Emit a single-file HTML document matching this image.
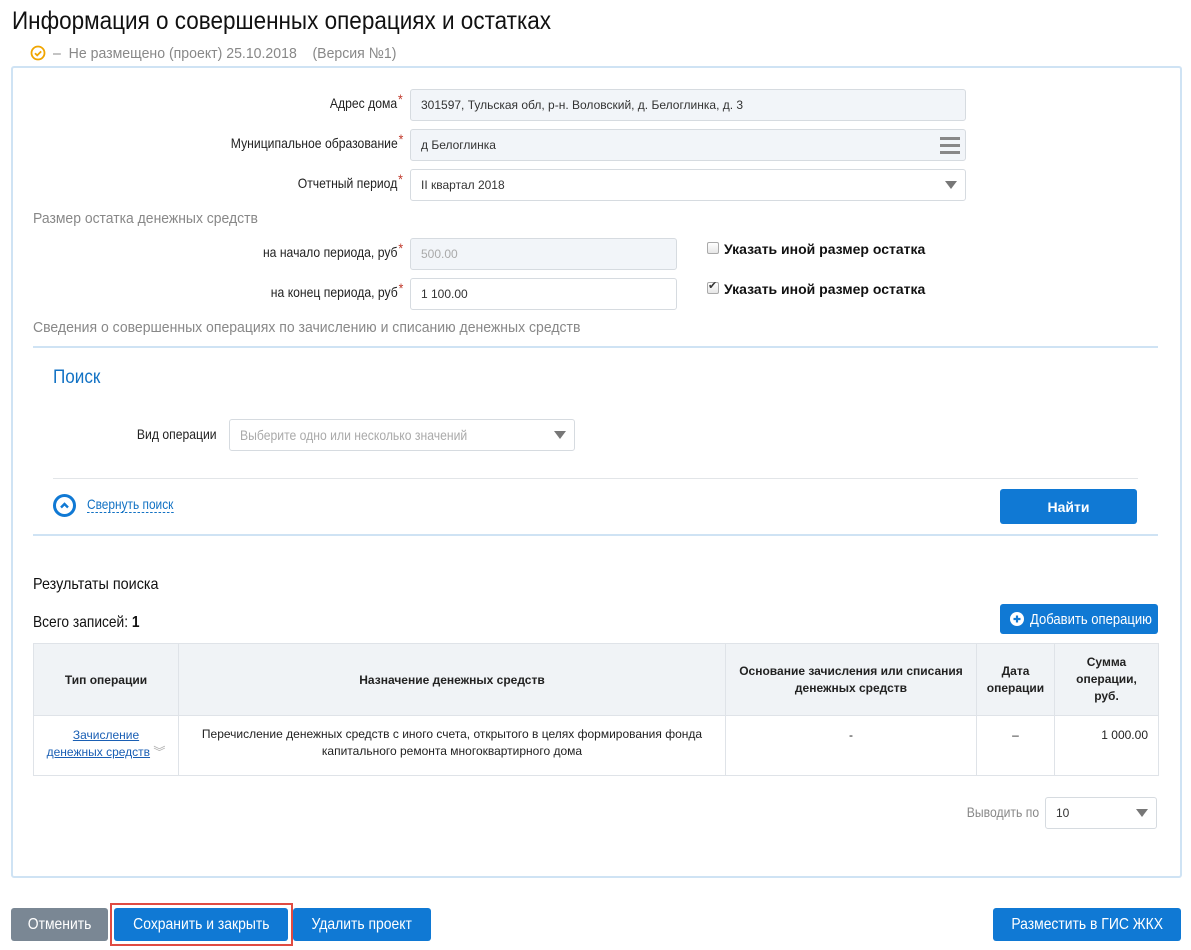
<!DOCTYPE html>
<html><head><meta charset="utf-8"><style>
*{box-sizing:border-box;margin:0;padding:0}
body{width:1191px;height:950px;background:#fff;position:relative;overflow:hidden;font-family:"Liberation Sans",sans-serif;color:#222}
.a{position:absolute;white-space:nowrap}
.c{display:inline-block;white-space:nowrap;transform:scaleX(.87);transform-origin:left center}
.cr{display:inline-block;white-space:nowrap;transform:scaleX(.87);transform-origin:right center}
.cc{display:inline-block;white-space:nowrap;transform:scaleX(.87);transform-origin:center center}
.lbl{font-size:14px;text-align:right;color:#222}
.lbl i{color:#c0392b;font-style:normal;position:relative;top:-4px;font-size:14px;margin-left:1px}
.inp{position:absolute;border:1px solid #d6dbe0;border-radius:3px;background:#fff;font-size:12px;color:#333;padding-left:10px;display:flex;align-items:center}
.g{background:#f2f5f9}
.tri{position:absolute;right:8px;top:50%;margin-top:-4px;width:0;height:0;border-left:6px solid transparent;border-right:6px solid transparent;border-top:8px solid #777}
.btn{position:absolute;background:#1079d4;color:#fff;border-radius:3px;font-size:16px;display:flex;align-items:center;justify-content:center;white-space:nowrap}
.cb{position:absolute;width:12px;height:12px;border:1px solid #aaa;border-radius:2px;background:linear-gradient(#fff,#e6e6e6)}
th{background:#f0f3f6;font-size:12px;font-weight:bold;border-right:1px solid #dfe3e8;color:#222}
td{font-size:12px;border-right:1px solid #dfe3e8;vertical-align:top;padding-top:12px;color:#222}
</style></head><body>
<div class="a" style="left:12px;top:7px;font-size:25px;color:#111"><span class="c" style="transform:scaleX(.9)">Информация о совершенных операциях и остатках</span></div>
<svg class="a" style="left:30px;top:45px" width="16" height="16" viewBox="0 0 16 16"><circle cx="8" cy="8" r="6.5" fill="none" stroke="#f0a500" stroke-width="1.8"/><path d="M5 8.2l2.2 2.2 4-4" fill="none" stroke="#f0a500" stroke-width="1.8"/></svg>
<div class="a" style="left:53px;top:45px;font-size:15px;color:#888"><span class="c" style="transform:scaleX(.94)">–&nbsp; Не размещено (проект) 25.10.2018 &nbsp;&nbsp; (Версия №1)</span></div>

<div class="a" style="left:11px;top:66px;width:1171px;height:812px;border:2px solid #cfe3f4;border-radius:3px"></div>

<div class="a lbl" style="left:100px;width:303px;top:95px"><span class="cr">Адрес дома<i>*</i></span></div>
<div class="inp g" style="left:410px;top:89px;width:556px;height:32px">301597, Тульская обл, р-н. Воловский, д. Белоглинка, д. 3</div>
<div class="a lbl" style="left:100px;width:303px;top:135px"><span class="cr">Муниципальное образование<i>*</i></span></div>
<div class="inp g" style="left:410px;top:129px;width:556px;height:32px">д Белоглинка
<div style="position:absolute;right:5px;top:7px;width:20px;height:17px;border-top:3px solid #888;border-bottom:3px solid #888"><div style="margin-top:4px;height:3px;background:#888"></div></div></div>
<div class="a lbl" style="left:100px;width:303px;top:175px"><span class="cr">Отчетный период<i>*</i></span></div>
<div class="inp" style="left:410px;top:169px;width:556px;height:32px">II квартал 2018<div class="tri"></div></div>

<div class="a" style="left:33px;top:210px;font-size:15px;color:#888"><span class="c" style="transform:scaleX(.93)">Размер остатка денежных средств</span></div>
<div class="a lbl" style="left:100px;width:303px;top:244px"><span class="cr">на начало периода, руб<i>*</i></span></div>
<div class="inp g" style="left:410px;top:238px;width:267px;height:32px;color:#aaa">500.00</div>
<div class="a lbl" style="left:100px;width:303px;top:284px"><span class="cr">на конец периода, руб<i>*</i></span></div>
<div class="inp" style="left:410px;top:278px;width:267px;height:32px">1 100.00</div>
<div class="cb" style="left:707px;top:242px"></div>
<div class="a" style="left:724px;top:241px;font-size:14px;font-weight:bold;color:#111">Указать иной размер остатка</div>
<div class="cb" style="left:707px;top:282px"><span style="position:absolute;left:0;top:-4px;font-size:11px;color:#333">✔</span></div>
<div class="a" style="left:724px;top:281px;font-size:14px;font-weight:bold;color:#111">Указать иной размер остатка</div>

<div class="a" style="left:33px;top:319px;font-size:15px;color:#888"><span class="c" style="transform:scaleX(.935)">Сведения о совершенных операциях по зачислению и списанию денежных средств</span></div>
<div class="a" style="left:33px;top:346px;width:1125px;height:2px;background:#cfe3f4"></div>
<div class="a" style="left:53px;top:367px;font-size:19px;color:#1272c4"><span class="c" style="transform:scaleX(.9)">Поиск</span></div>
<div class="a lbl" style="left:100px;width:117px;top:426px"><span class="cr">Вид операции</span></div>
<div class="inp" style="left:229px;top:419px;width:346px;height:32px;color:#aaa;font-size:14px"><span class="c">Выберите одно или несколько значений</span><div class="tri"></div></div>
<div class="a" style="left:53px;top:478px;width:1085px;height:1px;background:#e2e5e8"></div>
<div class="a" style="left:53px;top:494px;width:23px;height:23px;border:3px solid #1079d4;border-radius:50%"></div>
<svg class="a" style="left:57px;top:498px" width="15" height="15" viewBox="0 0 15 15"><path d="M4 9.5l3.5-3.5L11 9.5" fill="none" stroke="#1079d4" stroke-width="2.4"/></svg>
<div class="a" style="left:87px;top:496px;font-size:14px;color:#1272c4;line-height:16px"><span class="c" style="border-bottom:1px dashed #1272c4;transform:scaleX(.85)">Свернуть поиск</span></div>
<div class="btn" style="left:1000px;top:489px;width:137px;height:35px;font-size:14px;font-weight:bold">Найти</div>
<div class="a" style="left:33px;top:534px;width:1125px;height:2px;background:#cfe3f4"></div>

<div class="a" style="left:33px;top:576px;font-size:16px;color:#111"><span class="c" style="transform:scaleX(.9)">Результаты поиска</span></div>
<div class="a" style="left:33px;top:614px;font-size:16px;color:#111"><span class="c" style="transform:scaleX(.86)">Всего записей: <b>1</b></span></div>
<div class="btn" style="left:1000px;top:604px;width:158px;height:30px;font-size:15px;justify-content:flex-start;padding-left:10px"><svg width="14" height="14" viewBox="0 0 14 14" style="flex:none"><circle cx="7" cy="7" r="7" fill="#fff"/><path d="M7 3.5v7M3.5 7h7" stroke="#1079d4" stroke-width="2.2"/></svg><span class="c" style="margin-left:6px">Добавить операцию</span></div>

<table class="a" style="left:33px;top:643px;width:1126px;border-collapse:collapse;border:1px solid #dfe3e8">
<tr style="height:72px"><th style="width:145px">Тип операции</th><th style="width:547px">Назначение денежных средств</th><th style="width:251px;line-height:17px">Основание зачисления или списания<br>денежных средств</th><th style="width:78px;line-height:17px">Дата<br>операции</th><th style="line-height:17px">Сумма<br>операции,<br>руб.</th></tr>
<tr style="height:60px;border-top:1px solid #dfe3e8"><td style="text-align:center;line-height:17px;padding-top:11px"><span style="color:#1a5fb4;text-decoration:underline">Зачисление<br>денежных средств</span> <span style="color:#aaa">︾</span></td><td style="text-align:center;line-height:17px;padding-top:10px">Перечисление денежных средств с иного счета, открытого в целях формирования фонда<br>капитального ремонта многоквартирного дома</td><td style="text-align:center">-</td><td style="text-align:center">–</td><td style="text-align:right;padding-right:10px">1 000.00</td></tr>
</table>

<div class="a" style="left:940px;width:99px;text-align:right;top:804px;font-size:14px;color:#888"><span class="cr">Выводить по</span></div>
<div class="inp" style="left:1045px;top:797px;width:112px;height:32px">10<div class="tri"></div></div>

<div class="btn" style="left:11px;top:908px;width:97px;height:33px;background:#7a8794"><span class="cc">Отменить</span></div>
<div class="a" style="left:110px;top:903px;width:183px;height:43px;border:2px solid #e04b42"></div>
<div class="btn" style="left:114px;top:908px;width:174px;height:33px"><span class="cc">Сохранить и закрыть</span></div>
<div class="btn" style="left:293px;top:908px;width:138px;height:33px"><span class="cc">Удалить проект</span></div>
<div class="btn" style="left:993px;top:908px;width:188px;height:33px"><span class="cc">Разместить в ГИС ЖКХ</span></div>
</body></html>
